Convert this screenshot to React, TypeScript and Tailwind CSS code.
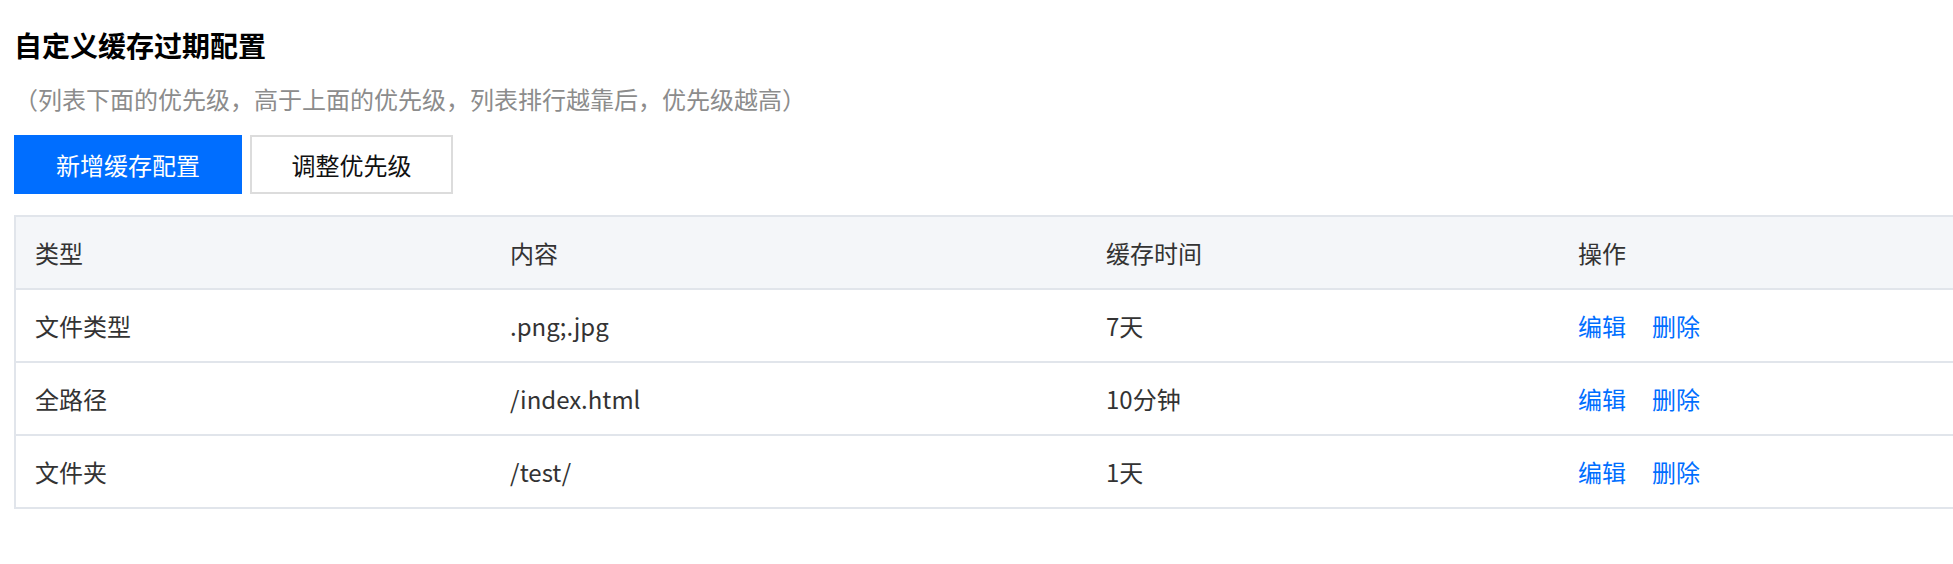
import React from "react";

const rows = [
  { type: "文件类型", content: ".png;.jpg", time: "7天" },
  { type: "全路径", content: "/index.html", time: "10分钟" },
  { type: "文件夹", content: "/test/", time: "1天" },
];

const App = () => {
  return (
    <div className="w-full min-h-[564px] bg-white overflow-hidden pl-[14px] pt-[25px] font-['Noto_Sans_CJK_SC','Noto_Sans',sans-serif] text-[#333]">
      <h1 className="h-[40px] flex items-center text-[28px] font-bold text-black">自定义缓存过期配置</h1>
      <p className="mt-[16px] h-[36px] flex items-center text-[24px] text-[#8c8c8c]">（列表下面的优先级，高于上面的优先级，列表排行越靠后，优先级越高）</p>

      <div className="mt-[18px] flex gap-[8px]">
        <button className="w-[228px] h-[59px] bg-[#006eff] text-white text-[24px] font-normal flex items-center justify-center">新增缓存配置</button>
        <button className="w-[203px] h-[59px] bg-white border-2 border-[#dcdcdc] text-[#111] text-[24px] font-normal flex items-center justify-center">调整优先级</button>
      </div>

      {/* table */}
      <div className="mt-[21px] w-[2380px] border-t-2 border-l-2 border-[#e1e5eb] text-[24px]">
        <div className="grid grid-cols-[474px_596px_472px_1fr] h-[73px] items-center bg-[#f4f6f9] border-b-2 border-[#e1e5eb] text-[#333]">
          <div className="px-[19px]">类型</div>
          <div className="px-[20px]">内容</div>
          <div className="px-[20px]">缓存时间</div>
          <div className="px-[20px]">操作</div>
        </div>
        {rows.map((r) => (
          <div key={r.type} className="grid grid-cols-[474px_596px_472px_1fr] h-[73px] items-center border-b-2 border-[#e1e5eb]">
            <div className="px-[19px]">{r.type}</div>
            <div className="px-[20px]">{r.content}</div>
            <div className="px-[20px]">{r.time}</div>
            <div className="px-[20px] flex gap-[26px] text-[#006eff]">
              <a className="cursor-pointer">编辑</a>
              <a className="cursor-pointer">删除</a>
            </div>
          </div>
        ))}
      </div>
    </div>
  );
};

export default App;
